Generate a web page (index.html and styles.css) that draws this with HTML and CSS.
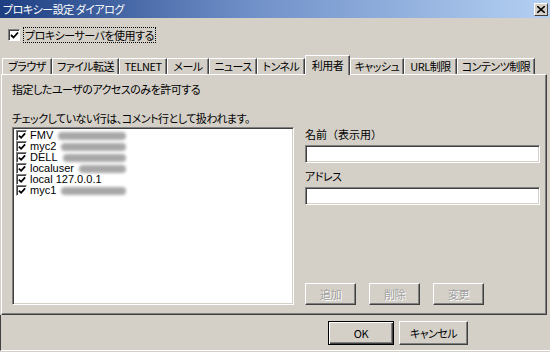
FILE: index.html
```html
<!DOCTYPE html>
<html lang="ja">
<head>
    <meta charset="UTF-8">
    <meta name="viewport" content="width=device-width, initial-scale=1.0">
    <link rel="stylesheet" href="styles.css">
    <title>プロキシー設定 ダイアログ</title>
</head>
<body>
<div class="window">
    <div class="titlebar">
        <span class="title">プロキシー設定 ダイアログ</span>
        <span class="close">
            <svg width="8" height="7" viewBox="0 0 8 7"><path d="M0 0L8 7M8 0L0 7" stroke="#000" stroke-width="1.6"/></svg>
        </span>
    </div>

    <div class="use-proxy">
        <span class="check"><svg width="9" height="9" viewBox="0 0 9 9"><path d="M1 4L3.5 6.5L8 1.5" fill="none" stroke="#000" stroke-width="1.8"/></svg></span>
        <span class="focus">プロキシーサーバを使用する</span>
    </div>

    <div class="tabs">
        <span class="tab">ブラウザ</span>
        <span class="tab">ファイル転送</span>
        <span class="tab">TELNET</span>
        <span class="tab">メール</span>
        <span class="tab">ニュース</span>
        <span class="tab">トンネル</span>
        <span class="tab active">利用者</span>
        <span class="tab">キャッシュ</span>
        <span class="tab">URL制限</span>
        <span class="tab">コンテンツ制限</span>
    </div>

    <div class="panel">
        <div class="lead">指定したユーザのアクセスのみを許可する</div>
        <div class="cols">
            <div class="left">
                <div class="note">チェックしていない行は、コメント行として扱われます。</div>
                <div class="listbox">
                    <div class="row"><span class="check small"><svg width="8" height="8" viewBox="0 0 9 9"><path d="M1 4L3.5 6.5L8 1.5" fill="none" stroke="#000" stroke-width="2"/></svg></span><span class="name">FMV</span><span class="blur"></span></div>
                    <div class="row"><span class="check small"><svg width="8" height="8" viewBox="0 0 9 9"><path d="M1 4L3.5 6.5L8 1.5" fill="none" stroke="#000" stroke-width="2"/></svg></span><span class="name">myc2</span><span class="blur"></span></div>
                    <div class="row"><span class="check small"><svg width="8" height="8" viewBox="0 0 9 9"><path d="M1 4L3.5 6.5L8 1.5" fill="none" stroke="#000" stroke-width="2"/></svg></span><span class="name">DELL</span><span class="blur"></span></div>
                    <div class="row"><span class="check small"><svg width="8" height="8" viewBox="0 0 9 9"><path d="M1 4L3.5 6.5L8 1.5" fill="none" stroke="#000" stroke-width="2"/></svg></span><span class="name">localuser</span><span class="blur"></span></div>
                    <div class="row"><span class="check small"><svg width="8" height="8" viewBox="0 0 9 9"><path d="M1 4L3.5 6.5L8 1.5" fill="none" stroke="#000" stroke-width="2"/></svg></span><span class="name">local 127.0.0.1</span></div>
                    <div class="row"><span class="check small"><svg width="8" height="8" viewBox="0 0 9 9"><path d="M1 4L3.5 6.5L8 1.5" fill="none" stroke="#000" stroke-width="2"/></svg></span><span class="name">myc1</span><span class="blur"></span></div>
                </div>
            </div>
            <div class="right">
                <label class="field-label wide">名前（表示用）</label>
                <input type="text" class="field">
                <label class="field-label">アドレス</label>
                <input type="text" class="field">
                <div class="actions">
                    <button type="button" class="btn disabled">追加</button>
                    <button type="button" class="btn disabled">削除</button>
                    <button type="button" class="btn disabled">変更</button>
                </div>
            </div>
        </div>
    </div>

    <div class="footer">
        <button type="button" class="btn default">OK</button>
        <button type="button" class="btn cancel">キャンセル</button>
    </div>
</div>
</body>
</html>
```

FILE: styles.css
```css
body {
    margin: 0;
    background: #d4d0c8;
    font-family: "Noto Sans CJK JP", "Liberation Sans", sans-serif;
    font-size: 11px;
    letter-spacing: -0.5px;
    font-feature-settings: "palt";
    color: #000;
}

.window {
    width: 550px;
    height: 352px;
    overflow: hidden;
    display: flex;
    flex-direction: column;
}

.titlebar {
    height: 18px;
    background: linear-gradient(90deg, #1d3f82, #6f8fc8 45%, #b4d0f2);
    display: flex;
    align-items: center;
    justify-content: space-between;
    padding: 0 2px 0 3px;
}

.title {
    color: #fff;
    line-height: 18px;
}

.close {
    width: 12px;
    height: 11px;
    background: #d4d0c8;
    border: 1px solid;
    border-color: #fff #404040 #404040 #fff;
    display: flex;
    align-items: center;
    justify-content: center;
}

.use-proxy {
    display: flex;
    align-items: center;
    height: 16px;
    margin: 9px 0 0 8px;
}

.check {
    width: 12px;
    height: 12px;
    box-sizing: border-box;
    background: #fff;
    border: 1px solid;
    border-color: #808080 #fff #fff #808080;
    box-shadow: inset 1px 1px #404040;
    display: flex;
    align-items: center;
    justify-content: center;
}

.focus {
    margin-left: 4px;
    padding: 0 1px;
    line-height: 14px;
    outline: 1px dotted #000;
}

.tabs {
    display: flex;
    align-items: flex-end;
    height: 19px;
    margin: 12px 0 0 2px;
    position: relative;
    z-index: 1;
}

.tab {
    height: 16px;
    line-height: 15px;
    border: 1px solid;
    border-bottom: none;
    border-color: #fff #404040 #fff #fff;
    box-shadow: inset -1px 0 #808080;
    box-sizing: border-box;
    white-space: nowrap;
    text-align: center;
}

.tab:nth-child(1) { width: 50px; }
.tab:nth-child(2) { width: 67px; }
.tab:nth-child(3) { width: 48px; }
.tab:nth-child(4) { width: 42px; }
.tab:nth-child(5) { width: 48px; }
.tab:nth-child(6) { width: 48px; }
.tab:nth-child(8) { width: 54px; }
.tab:nth-child(9) { width: 53px; }
.tab:nth-child(10) { width: 78px; }

.tab.active {
    width: 45px;
    height: 20px;
    margin-bottom: -1px;
    background: #d4d0c8;
    line-height: 18px;
}

.panel {
    margin-left: 1px;
    width: 546px;
    height: 241px;
    box-sizing: border-box;
    border: 1px solid;
    border-color: #fff #404040 #404040 #fff;
    box-shadow: inset -1px -1px #808080;
    padding: 7px 0 0 10px;
}

.lead {
    line-height: 14px;
}

.cols {
    display: flex;
    margin-top: 15px;
}

.left {
    width: 282px;
}

.note {
    line-height: 14px;
    margin-bottom: 2px;
}

.listbox {
    height: 178px;
    box-sizing: border-box;
    background: #fff;
    border: 1px solid;
    border-color: #808080 #fff #fff #808080;
    box-shadow: inset 1px 1px #404040, inset -1px -1px #d4d0c8;
    padding: 2px 0 0 3px;
}

.row {
    display: flex;
    align-items: center;
    width: 110px;
    height: 11px;
    font-family: "Liberation Sans", sans-serif;
    font-size: 11px;
    letter-spacing: 0;
}

.check.small {
    width: 11px;
    height: 11px;
}

.name {
    margin-left: 3px;
    line-height: 11px;
}

.blur {
    flex: 1;
    height: 8px;
    margin-left: 5px;
    background: #a8a8a8;
    border-radius: 4px;
    filter: blur(1.5px);
}

.right {
    margin-left: 11px;
    width: 235px;
    display: flex;
    flex-direction: column;
    padding-top: 16px;
}

.field-label {
    line-height: 14px;
    margin-bottom: 4px;
}

.field-label.wide {
    font-feature-settings: normal;
    letter-spacing: 0;
}

.field {
    height: 18px;
    width: 235px;
    box-sizing: border-box;
    margin: 0 0 6px 0;
    background: #fff;
    border: 1px solid;
    border-color: #808080 #fff #fff #808080;
    box-shadow: inset 1px 1px #404040, inset -1px -1px #d4d0c8;
    padding: 0;
}

.actions {
    display: flex;
    gap: 13px;
    margin-top: auto;
    margin-bottom: 0;
}

.btn {
    font-family: "Noto Sans CJK JP", sans-serif;
    font-size: 11px;
    letter-spacing: -0.5px;
    font-feature-settings: "palt";
    height: 22px;
    width: 51px;
    padding: 0;
    background: #d4d0c8;
    border: 1px solid;
    border-color: #fff #404040 #404040 #fff;
    box-shadow: inset -1px -1px #808080;
    color: #000;
}

.btn.disabled {
    color: #a0a0a0;
    text-shadow: 1px 1px #fff;
}

.footer {
    flex: 1;
    display: flex;
    justify-content: flex-end;
    align-items: flex-start;
    gap: 5px;
    padding: 6px 82px 0 0;
    border-left: 1px solid #404040;
    border-bottom: 1px solid #fff;
    margin-bottom: 1px;
}

.footer .btn {
    height: 24px;
}

.btn.default {
    width: 66px;
    border: 1px solid #000;
    box-shadow: inset 1px 1px #fff, inset -1px -1px #404040, inset -2px -2px #808080;
}

.btn.cancel {
    width: 69px;
}
```
